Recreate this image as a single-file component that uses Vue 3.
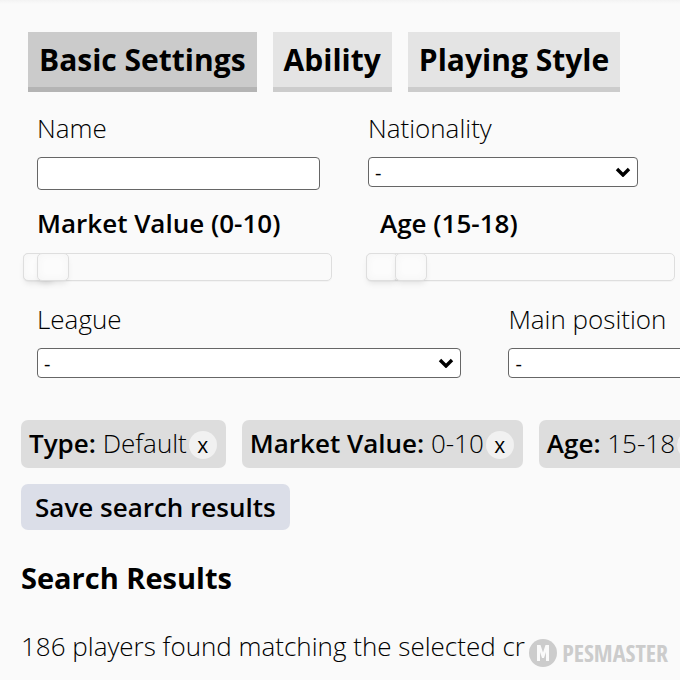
<script setup>
import { ref } from 'vue'

const tabs = ['Basic Settings', 'Ability', 'Playing Style']
const activeTab = ref('Basic Settings')

const name = ref('')
const sliders = ref([
  { id: 'market', label: 'Market Value', min: 0, max: 200, low: 0, high: 10 },
  { id: 'age', label: 'Age', min: 15, max: 44, low: 15, high: 18 }
])

const filters = ref([
  { label: 'Type', value: 'Default' },
  { label: 'Market Value', value: '0-10' },
  { label: 'Age', value: '15-18' }
])

function removeFilter(label) {
  filters.value = filters.value.filter((f) => f.label !== label)
}
</script>

<template>
  <main class="page">
    <nav class="tabs">
      <button
        v-for="tab in tabs"
        :key="tab"
        type="button"
        class="tab"
        :class="{ active: tab === activeTab }"
        @click="activeTab = tab"
      >{{ tab }}</button>
    </nav>

    <form class="settings" @submit.prevent>
      <div class="row basics">
        <div class="field">
          <label for="name">Name</label>
          <input id="name" v-model="name" class="control text" type="text">
        </div>
        <div class="field nationality">
          <label for="nationality">Nationality</label>
          <div class="select">
            <select id="nationality" class="control"><option>-</option></select>
            <svg class="chevron" viewBox="0 0 16 10" aria-hidden="true"><path d="M2 2l6 6 6-6" /></svg>
          </div>
        </div>
      </div>

      <div class="ranges">
        <fieldset v-for="s in sliders" :key="s.id" class="range">
          <legend>{{ s.label }} ({{ s.low }}-{{ s.high }})</legend>
          <div class="track">
            <input v-model.number="s.low" type="range" :min="s.min" :max="s.max" :aria-label="`${s.label} from`">
            <input v-model.number="s.high" type="range" :min="s.min" :max="s.max" :aria-label="`${s.label} to`">
          </div>
        </fieldset>
      </div>

      <div class="row places">
        <div class="field">
          <label for="league">League</label>
          <div class="select">
            <select id="league" class="control"><option>-</option></select>
            <svg class="chevron" viewBox="0 0 16 10" aria-hidden="true"><path d="M2 2l6 6 6-6" /></svg>
          </div>
        </div>
        <div class="field">
          <label for="position">Main position</label>
          <div class="select">
            <select id="position" class="control"><option>-</option></select>
            <svg class="chevron" viewBox="0 0 16 10" aria-hidden="true"><path d="M2 2l6 6 6-6" /></svg>
          </div>
        </div>
      </div>
    </form>

    <section class="results">
      <ul class="chips">
        <li v-for="f in filters" :key="f.label" class="chip">
          <span><strong>{{ f.label }}:</strong> {{ f.value }}</span>
          <button type="button" class="remove" @click="removeFilter(f.label)">x</button>
        </li>
      </ul>
      <button type="button" class="save">Save search results</button>
      <h2>Search Results</h2>
      <p>186 players found matching the selected criteria</p>
    </section>

    <div class="brand">
      <svg class="mark" viewBox="0 0 28 28" aria-hidden="true">
        <circle cx="14" cy="14" r="14" />
        <path d="M8 22V6h3.500L14 13.500L16.500 6H20V22H17V13L15 19H13L11 13V22Z" />
      </svg>
      <span>PESMASTER</span>
    </div>
  </main>
</template>

<style>
body {
  background: #fafafa;
}
</style>

<style scoped>
* {
  box-sizing: border-box;
}

.page {
  position: relative;
  overflow: hidden;
  min-height: 100vh;
  padding-top: 32px;
  background: linear-gradient(#f3f3f3, #fafafa 4px);
  color: #000;
  font: 300 26px/36px "Open Sans", sans-serif;
}

button,
input,
select {
  font-family: inherit;
  color: inherit;
}

.tabs {
  display: flex;
  gap: 16px;
  padding-left: 28px;
}

.tab {
  height: 60px;
  padding: 0 11px;
  border: 0;
  border-bottom: 5px solid #ccc;
  background: #e4e4e4;
  font-size: 30px;
  font-weight: 700;
  line-height: 56px;
  white-space: nowrap;
}

.tab.active {
  border-bottom-color: #b4b4b4;
  background: #cbcbcb;
}

.settings {
  padding-top: 18px;
}

.row {
  display: grid;
  column-gap: 48px;
  padding-left: 37px;
}

.basics {
  grid-template-columns: 44% 1fr;
}

.nationality {
  padding-right: 42px;
}

.places {
  grid-template-columns: 66% 66%;
  column-gap: 47px;
  padding-top: 20px;
}

.field {
  display: flex;
  flex-direction: column;
  gap: 11px;
}

.control {
  display: block;
  width: 100%;
  height: 30px;
  padding: 0 6px;
  border: 1px solid #666;
  border-radius: 4px;
  background: #fff;
  font-size: 20px;
  appearance: none;
}

.text {
  height: 33px;
}

.select {
  position: relative;
}

.chevron {
  position: absolute;
  top: 10px;
  right: 7px;
  width: 16px;
  height: 10px;
  fill: none;
  stroke: #000;
  stroke-width: 3.4;
  pointer-events: none;
}

.ranges {
  display: grid;
  grid-template-columns: 1fr 1fr;
  column-gap: 34px;
  padding: 15px 5px 0 23px;
}

.range {
  min-width: 0;
  margin: 0;
  padding: 0;
  border: 0;
}

.range legend {
  padding: 0 0 12px 14px;
  font-weight: 600;
}

.track {
  display: grid;
  height: 28px;
  border: 1px solid #dedede;
  border-radius: 5px;
  box-shadow: 0 1px 1px rgba(0, 0, 0, 0.03);
}

.track input {
  grid-area: 1 / 1;
  width: calc(100% + 2px);
  height: 28px;
  margin: -1px;
  background: none;
  appearance: none;
  pointer-events: none;
}

.track input::-webkit-slider-thumb {
  width: 32px;
  height: 28px;
  border: 1px solid #dedede;
  border-radius: 5px;
  background: #fcfcfc;
  box-shadow: inset 0 0 9px #f4f4f4, 0 4px 6px -2px rgba(0, 0, 0, 0.1);
  appearance: none;
  pointer-events: auto;
}

.results {
  padding: 42px 0 15px 21px;
}

.chips {
  display: flex;
  gap: 16px;
  margin: 0;
  padding: 0;
  list-style: none;
}

.chip {
  display: flex;
  flex: none;
  gap: 2px;
  align-items: center;
  height: 48px;
  padding: 0 9px 0 8px;
  border-radius: 7px;
  background: #ddd;
  white-space: nowrap;
}

.chip span {
  padding-bottom: 3px;
}

strong {
  font-weight: 600;
}

.remove {
  width: 28px;
  height: 28px;
  margin-top: 2px;
  padding: 0;
  border: 0;
  border-radius: 50%;
  background: #f1f1f1;
  font-size: 21px;
  line-height: 26px;
}

.save {
  height: 46px;
  margin-top: 16px;
  padding: 0 14px;
  border: 0;
  border-radius: 7px;
  background: #dbdee8;
  font-size: 26px;
  font-weight: 600;
  line-height: 42px;
}

h2 {
  margin: 29px 0 31px;
  font-size: 29px;
  font-weight: 700;
  line-height: 38px;
}

p {
  margin: 0;
  white-space: nowrap;
}

.brand {
  position: absolute;
  right: 0;
  bottom: 8px;
  display: flex;
  align-items: center;
  gap: 5px;
  padding: 0 12px 0 4px;
  background: #fafafa;
  color: #ccc;
  font: 700 24px/38px "Open Sans Condensed", "Roboto Condensed", sans-serif;
}

.mark {
  width: 28px;
  height: 28px;
  fill: #ccc;
}

.mark path {
  fill: #fafafa;
}
</style>
